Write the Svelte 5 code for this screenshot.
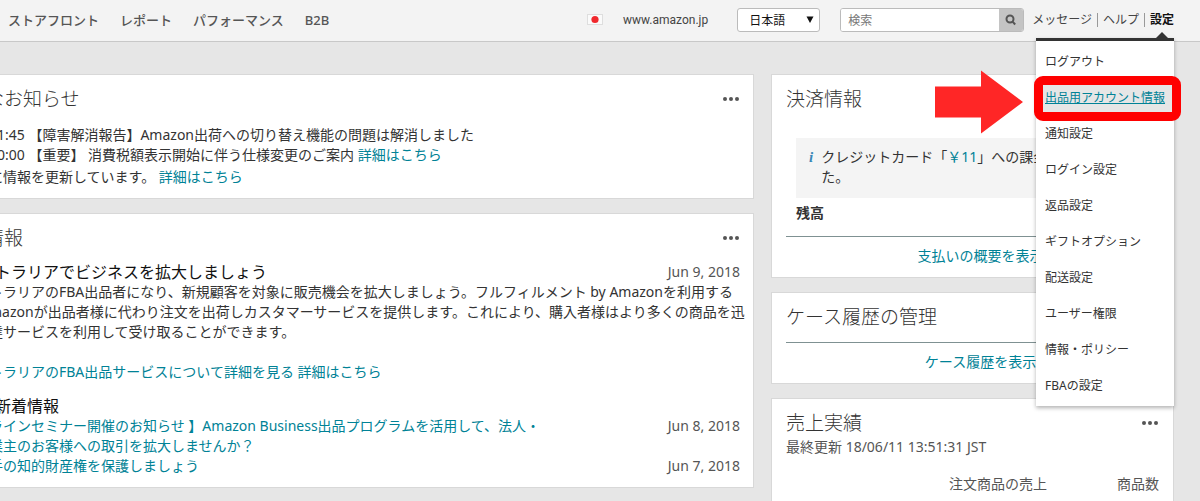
<script>
  const nav = ['ストアフロント', 'レポート', 'パフォーマンス', 'B2B'];
  const settings = [
    'ログアウト',
    '出品用アカウント情報',
    '通知設定',
    'ログイン設定',
    '返品設定',
    'ギフトオプション',
    '配送設定',
    'ユーザー権限',
    '情報・ポリシー',
    'FBAの設定'
  ];
  const marked = 1;
</script>

{#snippet more()}
  <button class="more" aria-label="メニュー">
    <svg width="18" height="4" viewBox="0 0 18 4"><circle cx="3" cy="2" r="2" /><circle cx="9" cy="2" r="2" /><circle cx="15" cy="2" r="2" /></svg>
  </button>
{/snippet}

<div class="page">
  <header>
    <nav class="main-nav">
      {#each nav as item}<a href="#top">{item}</a>{/each}
    </nav>
    <svg class="flag" width="16" height="11" viewBox="0 0 16 11">
      <rect x="0.5" y="0.5" width="15" height="10" fill="#fafafa" stroke="#dedede" />
      <circle cx="8" cy="5.5" r="3.6" fill="#f0282d" />
    </svg>
    <span class="domain">www.amazon.jp</span>
    <div class="language">
      <select aria-label="言語"><option>日本語</option></select>
      <svg width="8" height="7" viewBox="0 0 8 7"><path d="M0.5 0.5h7L4 7z" fill="#111" /></svg>
    </div>
    <form class="search">
      <input type="text" placeholder="検索" aria-label="検索" />
      <button type="button" aria-label="検索する">
        <svg width="12" height="12" viewBox="0 0 12 12" fill="none" stroke="#555" stroke-width="2"><circle cx="5" cy="5" r="3.5" /><path d="M7.3 7.3l2.9 3.2" /></svg>
      </button>
    </form>
    <div class="links">
      <a href="#messages">メッセージ</a>
      <a href="#help">ヘルプ</a>
      <div class="settings">
        <a href="#settings" class="current">設定</a>
        <div class="menu">
          <svg class="caret" width="14" height="7" viewBox="0 0 14 7"><path d="M0 7L7 0l7 7z" fill="#333" /></svg>
          <ul>
            {#each settings as item, i}
              <li class:marked={i === marked}>
                <a href="#item">{item}</a>
                {#if i === marked}
                  <span class="frame"></span>
                  <svg class="arrow" width="90" height="64" viewBox="0 0 90 64"><path d="M1 16.500H47V0.500L89 32L47 63.500V47.500H1z" fill="#ff2626" /></svg>
                {/if}
              </li>
            {/each}
          </ul>
        </div>
      </div>
    </div>
  </header>

  <main>
    <div class="left">
      <section class="card notices">
        <div class="head"><h2>なお知らせ</h2>{@render more()}</div>
        <div class="body">
          <p>11:45 【障害解消報告】Amazon出荷への切り替え機能の問題は解消しました</p>
          <p>10:00 【重要】 消費税額表示開始に伴う仕様変更のご案内 <a href="#detail">詳細はこちら</a></p>
          <p>に情報を更新しています。 <a href="#detail">詳細はこちら</a></p>
        </div>
      </section>

      <section class="card news">
        <div class="head"><h2>情報</h2>{@render more()}</div>
        <div class="row title"><h3>トラリアでビジネスを拡大しましょう</h3><time>Jun 9, 2018</time></div>
        <div class="body">
          <p>トラリアのFBA出品者になり、新規顧客を対象に販売機会を拡大しましょう。フルフィルメント by Amazonを利用する<br />mazonが出品者様に代わり注文を出荷しカスタマーサービスを提供します。これにより、購入者様はより多くの商品を迅<br />達サービスを利用して受け取ることができます。</p>
          <p class="link-line"><a href="#fba">トラリアのFBA出品サービスについて詳細を見る 詳細はこちら</a></p>
        </div>
        <div class="row title"><h3>新着情報</h3></div>
        <div class="body">
          <div class="row">
            <a href="#seminar">ラインセミナー開催のお知らせ 】Amazon Business出品プログラムを活用して、法人・<br />業主のお客様への取引を拡大しませんか？</a>
            <time>Jun 8, 2018</time>
          </div>
          <div class="row"><a href="#rights">手の知的財産権を保護しましょう</a><time>Jun 7, 2018</time></div>
        </div>
      </section>
    </div>

    <div class="right">
      <section class="card payment">
        <div class="head"><h2>決済情報</h2></div>
        <div class="alert"><i>i</i><p>クレジットカード「<a href="#charge">￥11</a>」への課金<br />た。</p></div>
        <strong>残高</strong>
        <a class="more-link" href="#payments">支払いの概要を表示</a>
      </section>
      <section class="card cases">
        <div class="head"><h2>ケース履歴の管理</h2></div>
        <a class="more-link" href="#cases">ケース履歴を表示</a>
      </section>
      <section class="card sales">
        <div class="head"><h2>売上実績</h2>{@render more()}</div>
        <p class="updated">最終更新 18/06/11 13:51:31 JST</p>
        <table><thead><tr><th></th><th>注文商品の売上</th><th>商品数</th></tr></thead></table>
      </section>
    </div>
  </main>
</div>

<style>
  :global(body) { background: #e6e6e6; }
  .page {
    height: 100vh;
    overflow: hidden;
    font: 14px/20px "Noto Sans", "Noto Sans CJK JP", sans-serif;
    color: #333;
  }
  a { color: #008296; text-decoration: none; }
  h2, h3, p, ul { margin: 0; padding: 0; font-weight: 400; }
  button { border: 0; padding: 0; background: none; cursor: pointer; }
  svg { display: block; }

  header {
    display: flex;
    align-items: center;
    height: 41px;
    padding: 0 26px 2px 8px;
    box-sizing: border-box;
    background: #f3f3f3;
    box-shadow: 0 1px #c8c8c8;
    position: relative;
    z-index: 1;
    white-space: nowrap;
  }
  .main-nav { display: flex; gap: 21px; flex: 1; font-size: 13px; font-weight: 500; }
  .main-nav a { color: #555; }
  .domain { margin: 0 29px 0 20px; font: 12px/20px Roboto, sans-serif; color: #444; }
  .language { position: relative; }
  .language svg { position: absolute; right: 6px; top: 8px; pointer-events: none; }
  select {
    display: block;
    appearance: none;
    width: 83px;
    height: 24px;
    padding: 0 11px;
    border: 1px solid #bbb;
    border-radius: 3px;
    background: #fff;
    color: #111;
    font: 12px "Noto Sans CJK JP", sans-serif;
  }
  .search {
    display: flex;
    width: 184px;
    height: 24px;
    box-sizing: border-box;
    margin: 0 8px 0 20px;
    border: 1px solid #bbb;
    border-radius: 3px;
    background: #fff;
    overflow: hidden;
  }
  .search input { flex: 1; min-width: 0; border: 0; padding: 0 7px; outline: 0; font: 12px "Noto Sans CJK JP", sans-serif; }
  .search input::placeholder { color: #777; }
  .search button { width: 24px; background: #c4c4c4; display: grid; place-items: center; }
  .links { display: flex; align-items: center; font-size: 12px; line-height: 14px; }
  .links > a { color: #444; padding-right: 5px; margin-right: 5px; border-right: 1px solid #999; }
  .settings { position: relative; }
  .current { color: #111; font-weight: 700; }

  .menu {
    position: absolute;
    top: 25px;
    right: 0;
    width: 138px;
    border-top: 3px solid #333;
    background: #fff;
    box-shadow: 0 2px 4px rgba(0, 0, 0, 0.3);
  }
  .caret { position: absolute; right: 5px; top: -9px; }
  .menu ul { list-style: none; padding: 3px 0 2px; }
  .menu li { position: relative; line-height: 36px; height: 36px; padding-left: 9px; }
  .menu li a { color: #333; position: relative; }
  .menu .marked a { color: #008296; text-decoration: underline; z-index: 1; }
  .frame {
    position: absolute;
    inset: -4px -7px -5px -2px;
    border: 9px solid #ff0000;
    border-radius: 9px;
    background: #e6e6e6;
  }
  .arrow { position: absolute; right: 150px; top: -10px; }

  main { display: grid; grid-template-columns: minmax(0, 1fr) 403px; gap: 17px; padding: 33px 26px 0 0; }
  .left, .right { display: flex; flex-direction: column; gap: 14px; }
  .card { background: #fff; border: 1px solid #d8d8d8; }
  .left .card { border-left: 0; padding-right: 13px; white-space: nowrap; }
  .right .card { padding: 0 14px; }
  .head { display: flex; justify-content: space-between; align-items: center; height: 48px; }
  h2 { font-size: 19px; line-height: 28px; font-weight: 300; }
  .left h2 { margin-left: -15px; }
  .more svg { fill: #555; }
  .body { margin-left: -11px; }
  .notices { height: 123px; }
  .notices .body { padding-top: 2px; }
  .notices p:last-child { padding-top: 2px; }
  .news { height: 273px; }
  .row { display: flex; justify-content: space-between; }
  .title h3 { margin-left: -5px; font-size: 16px; color: #111; }
  .title { height: 20px; }
  .link-line { padding: 20px 0 14px; }
  time { color: #555; }

  .payment { height: 202px; }
  .alert { display: flex; gap: 8px; margin: 15px 0 0 10px; padding: 9px 13px 11px; background: #f4f4f4; white-space: nowrap; }
  .alert i { font: italic 700 15px/20px "Liberation Serif", serif; color: #3a87b7; }
  strong { display: block; padding: 5px 10px 13px; }
  .more-link { display: block; border-top: 1px solid #7f9192; padding: 9px 0 0 16px; text-align: center; }
  .cases { height: 90px; }
  .cases .more-link { margin-top: 1px; }
  .sales { height: 130px; }
  .updated { color: #555; margin-top: -10px; }
  table { width: 100%; border-spacing: 0; margin-top: 17px; color: #555; }
  th { font-weight: 400; padding: 0; text-align: right; }
  th:last-child { width: 112px; }
</style>
